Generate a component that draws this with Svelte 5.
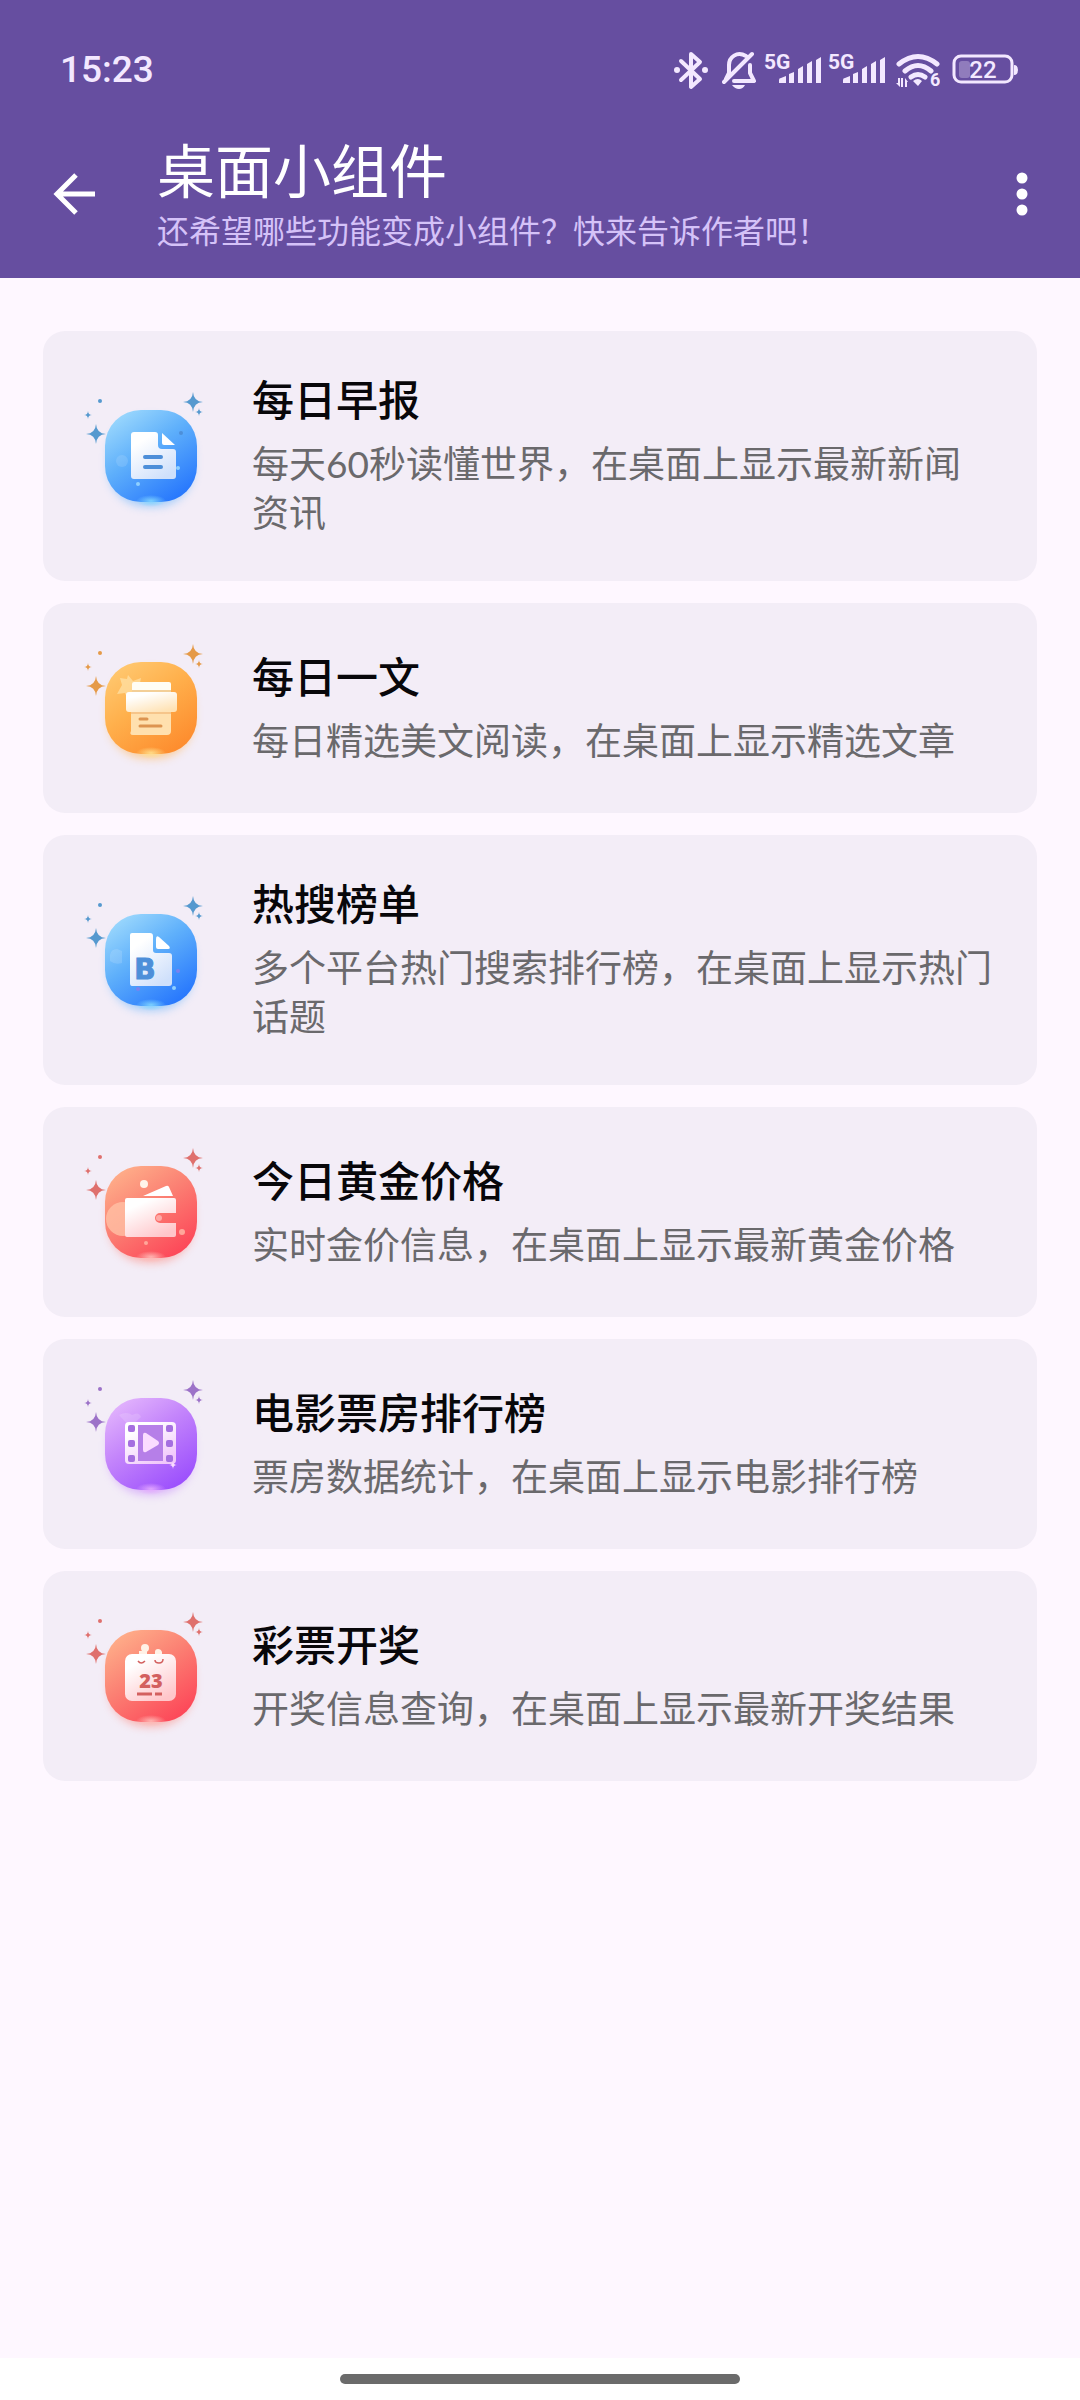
<script lang="ts">
  type Widget = {
    icon: string;
    title: string;
    desc: string;
    from: string;
    mid: string;
    to: string;
    spark: string;
    line: string;
    paper: string;
    glow: string;
  };

  const blue = { from: '#a3ddfd', mid: '#5fb0fb', to: '#2474fd', spark: '#5599cf', line: '#4d8fd9', paper: '#cfe0fb', glow: '#7fd4ff' };
  const orange = { from: '#ffcb74', mid: '#ffb04c', to: '#fd8a2c', spark: '#e59a48', line: '#dd9450', paper: '#ffe2b4', glow: '#ffe08c' };
  const red = { from: '#ffb48c', mid: '#fb8274', to: '#fd4457', spark: '#df706d', line: '#d3605f', paper: '#ffc6ca', glow: '#ffb9b5' };
  const purple = { from: '#e6b9fd', mid: '#c384fb', to: '#9a4dfd', spark: '#9c72c8', line: '#a56fe0', paper: '#f0c6fb', glow: '#e3a8ff' };

  const widgets: Widget[] = [
    { icon: 'news', title: '每日早报', desc: '每天60秒读懂世界，在桌面上显示最新新闻资讯', ...blue },
    { icon: 'article', title: '每日一文', desc: '每日精选美文阅读，在桌面上显示精选文章', ...orange },
    { icon: 'hot', title: '热搜榜单', desc: '多个平台热门搜索排行榜，在桌面上显示热门话题', ...blue },
    { icon: 'gold', title: '今日黄金价格', desc: '实时金价信息，在桌面上显示最新黄金价格', ...red },
    { icon: 'movie', title: '电影票房排行榜', desc: '票房数据统计，在桌面上显示电影排行榜', ...purple },
    { icon: 'lottery', title: '彩票开奖', desc: '开奖信息查询，在桌面上显示最新开奖结果', ...red }
  ];

  const holes = [45, 60, 75];

  // four-pointed star around x, y
  function sparkle(x: number, y: number, r: number) {
    const c = r * 0.06;
    return `M${x} ${y - r}Q${x + c} ${y - c} ${x + r} ${y}Q${x + c} ${y + c} ${x} ${y + r}Q${x - c} ${y + c} ${x - r} ${y}Q${x - c} ${y - c} ${x} ${y - r}Z`;
  }
</script>

{#snippet signal()}
  <svg class="signal" width="58" height="44" viewBox="0 0 58 44">
    <text x="0" y="21">5G</text>
    <path d="M15 35v-3q0-2 2-2l5-2v7zM25 26l5-2v11h-5zM34 21l5-3v17h-5zM43 16l5-3v22h-5zM52 12l5-3v26h-5z" />
  </svg>
{/snippet}

<div class="screen">
  <header>
    <div class="status">
      <span class="time">15:23</span>
      <div class="status-icons">
        <svg class="bluetooth" width="34" height="44" viewBox="0 0 34 44">
          <path class="stroke" d="M7 13l19 18-9 8V6l9 8L7 32" />
          <circle cx="3" cy="22" r="3" />
          <circle cx="31" cy="22" r="3" />
        </svg>
        <svg class="bell" width="34" height="44" viewBox="0 0 34 44">
          <path class="stroke" d="M24 8C15 3 7 9 7 17v8L4 31M28 17v8l4 8H12M2 34L30 6" />
          <path d="M10 37h13q-2 4-6 4t-7-4z" />
        </svg>
        {@render signal()}
        {@render signal()}
        <svg class="wifi" width="44" height="44" viewBox="0 0 44 44">
          <path class="stroke wave" d="M3 16Q22 1 41 16M9 23Q22 12 35 23M15 29Q22 24 29 29" />
          <path d="M17 33q5-4 9 0l-4 5zM4 30v9l-4-4h2v-5zM5 30h2v9H5zM9 30l3 4h-1v5H9z" />
          <text x="34" y="38">6</text>
        </svg>
        <svg class="battery" width="68" height="44" viewBox="0 0 68 44">
          <rect class="case" x="2" y="8" width="58" height="26" rx="7" />
          <rect class="level" x="7" y="13" width="11" height="17" rx="3" />
          <path d="M62 17q4 0 4 5t-4 5z" />
          <text x="31" y="30" text-anchor="middle">22</text>
        </svg>
      </div>
    </div>

    <div class="toolbar">
      <button class="icon-button" aria-label="返回">
        <svg width="44" height="44" viewBox="0 0 44 44">
          <path class="arrow" d="M43 22H5M24 3L5 22l19 19" />
        </svg>
      </button>
      <div class="heading">
        <h1>桌面小组件</h1>
        <p>还希望哪些功能变成小组件？快来告诉作者吧！</p>
      </div>
      <button class="icon-button" aria-label="更多">
        <svg width="12" height="44" viewBox="0 0 12 44">
          <circle cx="6" cy="6" r="5.5" />
          <circle cx="6" cy="22" r="5.5" />
          <circle cx="6" cy="38" r="5.5" />
        </svg>
      </button>
    </div>
  </header>

  <main>
    <ul>
      {#each widgets as w}
        <li>
          <button class="card">
            <svg class="widget-icon" width="122" height="122" viewBox="0 0 122 122">
              <defs>
                <linearGradient id="bg-{w.icon}" x1="0.1" y1="0" x2="0.8" y2="1">
                  <stop offset="0" stop-color={w.from} />
                  <stop offset="0.45" stop-color={w.mid} />
                  <stop offset="1" stop-color={w.to} />
                </linearGradient>
                <linearGradient id="paper-{w.icon}" x1="0.1" y1="0" x2="0.7" y2="1">
                  <stop offset="0.2" stop-color="#fff" />
                  <stop offset="1" stop-color={w.paper} />
                </linearGradient>
                <radialGradient id="glow-{w.icon}">
                  <stop offset="0" stop-color={w.glow} stop-opacity="0.95" />
                  <stop offset="1" stop-color={w.glow} stop-opacity="0" />
                </radialGradient>
                <filter id="blur-{w.icon}" x="-30%" y="-30%" width="160%" height="160%">
                  <feGaussianBlur stdDeviation="4" />
                </filter>
                <clipPath id="clip-{w.icon}">
                  <rect x="19" y="15" width="92" height="92" rx="36" />
                </clipPath>
              </defs>

              <g fill={w.spark}>
                <path d={sparkle(107, 7, 10)} />
                <path d={sparkle(113, 17, 4)} />
                <path d={sparkle(10, 39, 10)} />
                <path d={sparkle(2, 20, 4)} />
                <circle cx="14" cy="6" r="2" />
              </g>

              <rect x="22" y="22" width="86" height="90" rx="38" fill={w.mid} opacity="0.5" filter="url(#blur-{w.icon})" />
              <rect x="19" y="15" width="92" height="92" rx="36" fill="url(#bg-{w.icon})" />
              <ellipse cx="65" cy="106" rx="15" ry="6" fill="url(#glow-{w.icon})" />

              {#if w.icon === 'news'}
                <circle cx="36" cy="66" r="6" fill="#fff" opacity="0.12" />
                <path d="M48 37H69q3 0 3 3v10q0 4 4 4H87q3 0 3 3V81q0 3-3 3H48q-3 0-3-3V40q0-3 3-3z" fill="url(#paper-news)" />
                <path d="M76 38L89 50H78q-2 0-2-2z" fill="#fff" />
                <path d="M59 62H75M59 72H75" stroke={w.line} stroke-width="4" stroke-linecap="round" />
                <circle cx="52" cy="89" r="2" fill="#8fd0ff" />
                <circle cx="92" cy="73" r="2" fill="#8fd0ff" />
                <circle cx="95" cy="38" r="2" fill={w.line} />
              {:else if w.icon === 'article'}
                <path d="M42 28l5 6 8-3-2 10 5 5-10 1-6 6-3-7-8 1 5-9-2-7 7 1z" fill="#ffe9b5" opacity="0.6" />
                <path d="M45 64H85V84q0 4-4 4H47q-4 0-2-4z" fill="#ffe0ae" />
                <rect x="46" y="35" width="39" height="12" rx="2" fill="#fffdf5" />
                <path d="M46 44H85" stroke="#f3cf98" stroke-width="2" />
                <rect x="40" y="45" width="51" height="20" rx="3" fill="url(#paper-article)" />
                <path d="M45 66H85" stroke="#f6c58a" stroke-width="2" />
                <path d="M54 72h7M54 79h21" stroke={w.line} stroke-width="3" stroke-linecap="round" />
              {:else if w.icon === 'hot'}
                <path d="M24 56q1-6 7-6l5 2v12q-7 2-12-2z" fill="#fff" opacity="0.14" />
                <path d="M46 34H64q3 0 3 3V51q0 3 3 3H83q3 0 3 3V84q0 3-3 3H46q-2 0-2-3V36q0-2 2-2z" fill="url(#paper-hot)" />
                <path d="M70 40q0-4 3-2l10 9q2 3-1 3H72q-2 0-2-2z" fill="#fff" />
                <text class="letter" x="59" y="80" text-anchor="middle" fill={w.line} stroke={w.line}>B</text>
                <circle cx="52" cy="90" r="2" fill="#7a82ee" />
                <circle cx="92" cy="72" r="2" fill="#7a82ee" />
                <circle cx="88" cy="89" r="2" fill="#8fd0ff" />
              {:else if w.icon === 'gold'}
                <circle cx="37" cy="68" r="17" fill="#ffc1a5" opacity="0.8" clip-path="url(#clip-gold)" />
                <circle cx="58" cy="33" r="4" fill="#fff4ea" />
                <path d="M57 45L80 35q2-1 3 1l4 9z" fill="#fff" />
                <path d="M41 47H88q2 0 2 2V62H74a5 5 0 0 0 0 10H90V84q0 2-2 2H41q-2 0-2-2V49q0-2 2-2z" fill="url(#paper-gold)" />
                <circle cx="73" cy="67" r="3" fill="#ffa9a6" />
                <circle cx="96" cy="81" r="3" fill="#ffa79a" />
                <circle cx="60" cy="92" r="2" fill="#ffa79a" />
              {:else if w.icon === 'movie'}
                <path d="M33 32q8-4 13 0 7-4 9 2l-11 10z" fill="#fff" opacity="0.15" />
                <rect x="39" y="39" width="51" height="42" rx="4" fill="url(#paper-movie)" />
                <rect x="52" y="42" width="25" height="36" fill="#b67fe8" />
                {#each holes as y}
                  <rect x="42" y={y - 3} width="7" height="7" rx="2" fill={w.line} />
                  <rect x="80" y={y - 3} width="7" height="7" rx="2" fill={w.line} />
                {/each}
                <path d="M57 52q0-3 3-2l12 8q2 2 0 4l-12 7q-3 1-3-2z" fill="#fbdcff" />
                <path d={sparkle(87, 82, 4)} fill="#fbdcff" />
              {:else}
                <circle cx="59" cy="33" r="4" fill="#fff1e6" />
                <path d="M53 36h8v6h-8zM69 37q0-3 3-3t4 3v5h-7z" fill="#fff1e6" />
                <rect x="39" y="39" width="51" height="47" rx="7" fill="url(#paper-lottery)" />
                <path d="M52 46q3 4 7 0M69 45q0 3 4 3t4-4" fill="none" stroke={w.line} stroke-width="1.5" />
                <text class="date" x="65" y="73" text-anchor="middle" fill={w.line}>23</text>
                <path d="M51 79h15M69 79h7" stroke={w.line} stroke-width="3" />
              {/if}
            </svg>
            <span class="text">
              <span class="title">{w.title}</span>
              <span class="desc">{w.desc}</span>
            </span>
          </button>
        </li>
      {/each}
    </ul>
  </main>

  <footer><span class="pill"></span></footer>
</div>

<style>
  :global(body) {
    background: #fef7ff;
  }

  .screen {
    display: flex;
    flex-direction: column;
    min-height: 100vh;
    font-family: Lato, 'Noto Sans CJK SC', sans-serif;
  }

  button {
    border: 0;
    background: none;
    font: inherit;
    cursor: pointer;
  }

  header {
    background: #664ea0;
    color: #fff;
  }

  .status {
    display: flex;
    align-items: center;
    justify-content: space-between;
    padding: 30px 60px 0;
    height: 80px;
    color: #f3e8ff;
    font-family: Roboto, sans-serif;
  }

  .time {
    font-size: 37px;
    font-weight: 500;
    line-height: 44px;
  }

  .status-icons {
    display: flex;
    align-items: center;
    gap: 6px;
  }

  .status-icons svg {
    fill: currentColor;
  }

  .status-icons .stroke {
    fill: none;
    stroke: currentColor;
    stroke-width: 4;
    stroke-linecap: round;
    stroke-linejoin: round;
  }

  .status-icons .wave {
    stroke-width: 5;
  }

  .bell {
    margin: 0 2px 0 8px;
  }

  .wifi {
    margin: 0 6px 0 4px;
  }

  .signal text {
    font-size: 21px;
    font-weight: 700;
  }

  .wifi text {
    font-size: 18px;
    font-weight: 700;
  }

  .battery .case {
    fill: none;
    stroke: currentColor;
    stroke-width: 3;
  }

  .battery .level {
    opacity: 0.3;
  }

  .battery text {
    font-size: 24px;
    font-weight: 500;
  }

  .toolbar {
    display: flex;
    align-items: center;
    height: 168px;
    padding: 0 43px;
  }

  .icon-button {
    display: flex;
    padding: 9px;
    fill: #fff;
  }

  .arrow {
    fill: none;
    stroke: #fff;
    stroke-width: 5;
  }

  .heading {
    flex: 1;
    padding-left: 52px;
  }

  h1 {
    margin: 0;
    font-size: 58px;
    font-weight: 400;
    line-height: 74px;
  }

  .heading p {
    margin: 0;
    color: #d5c2f8;
    font-size: 32px;
    line-height: 46px;
  }

  main {
    flex: 1;
    padding: 53px 43px;
  }

  ul {
    display: grid;
    gap: 22px;
    margin: 0;
    padding: 0;
    list-style: none;
  }

  .card {
    display: flex;
    align-items: center;
    gap: 44px;
    width: 100%;
    padding: 44px 43px;
    border-radius: 22px;
    background: #f3edf7;
    text-align: left;
  }

  .widget-icon {
    flex: none;
    overflow: visible;
  }

  .letter {
    font-family: 'DejaVu Sans', sans-serif;
    font-size: 28px;
    font-weight: 700;
    stroke-width: 1;
  }

  .date {
    font-family: 'Open Sans', sans-serif;
    font-size: 20px;
    font-weight: 800;
  }

  .text {
    flex: 1;
    display: grid;
    gap: 14px;
  }

  .title {
    color: #08070a;
    font-size: 42px;
    font-weight: 500;
    line-height: 50px;
  }

  .desc {
    color: #6a696c;
    font-size: 37px;
    line-height: 49px;
  }

  footer {
    display: flex;
    align-items: center;
    justify-content: center;
    height: 42px;
    background: #fff;
  }

  .pill {
    width: 37%;
    height: 10px;
    border-radius: 5px;
    background: #6b6b6b;
  }
</style>
